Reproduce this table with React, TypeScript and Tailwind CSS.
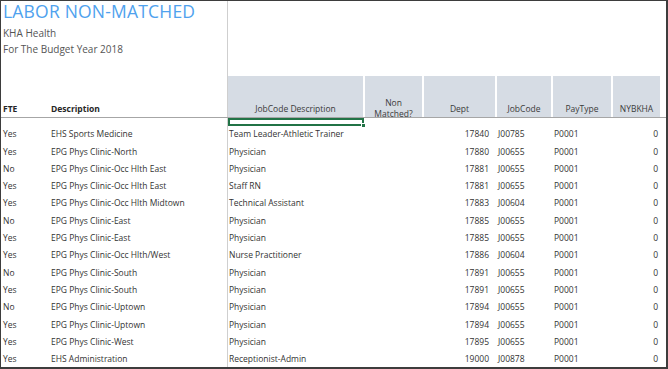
import React from "react";

type Row = [string, string, string, string, string, string, string];

const rows: Row[] = [
  ["Yes", "EHS Sports Medicine", "Team Leader-Athletic Trainer", "17840", "J00785", "P0001", "0"],
  ["Yes", "EPG Phys Clinic-North", "Physician", "17880", "J00655", "P0001", "0"],
  ["No", "EPG Phys Clinic-Occ Hlth East", "Physician", "17881", "J00655", "P0001", "0"],
  ["Yes", "EPG Phys Clinic-Occ Hlth East", "Staff RN", "17881", "J00655", "P0001", "0"],
  ["Yes", "EPG Phys Clinic-Occ Hlth Midtown", "Technical Assistant", "17883", "J00604", "P0001", "0"],
  ["No", "EPG Phys Clinic-East", "Physician", "17885", "J00655", "P0001", "0"],
  ["Yes", "EPG Phys Clinic-East", "Physician", "17885", "J00655", "P0001", "0"],
  ["Yes", "EPG Phys Clinic-Occ Hlth/West", "Nurse Practitioner", "17886", "J00604", "P0001", "0"],
  ["No", "EPG Phys Clinic-South", "Physician", "17891", "J00655", "P0001", "0"],
  ["Yes", "EPG Phys Clinic-South", "Physician", "17891", "J00655", "P0001", "0"],
  ["No", "EPG Phys Clinic-Uptown", "Physician", "17894", "J00655", "P0001", "0"],
  ["Yes", "EPG Phys Clinic-Uptown", "Physician", "17894", "J00655", "P0001", "0"],
  ["Yes", "EPG Phys Clinic-West", "Physician", "17895", "J00655", "P0001", "0"],
  ["Yes", "EHS Administration", "Receptionist-Admin", "19000", "J00878", "P0001", "0"],
];

const font = { fontFamily: '"Open Sans", "Noto Sans", sans-serif' };

export default function App() {
  return (
    <div
      className="w-[668px] h-[369px] bg-white border-l border-t border-r-2 border-b-2 border-[#3d3d3d] overflow-hidden text-[#3a3a3a]"
      style={font}
    >
      {/* Top header area */}
      <div className="flex h-[116px]">
        <div className="w-[226px] flex flex-col pl-[2px]">
          <div className="text-[17.5px] leading-[20px] text-[#4fa2ee] mt-[0px] tracking-[0.2px]">LABOR NON-MATCHED</div>
          <div className="text-[10px] leading-[14px] text-[#555] mt-[5px]">KHA Health</div>
          <div className="text-[10px] leading-[14px] text-[#555] mt-[2px]">For The Budget Year 2018</div>
          <div className="flex-1" />
          <div className="flex text-[8.5px] font-bold text-[#262626] leading-[12px] mb-[2px]">
            <div className="w-[48px]">FTE</div>
            <div>Description</div>
          </div>
        </div>
        <div className="w-px bg-[#cfcfcf]" />
        <div className="flex-1 flex flex-col justify-end">
          <div className="flex h-[41px] gap-[2px] text-[8.5px] leading-[11px] text-[#3b3b3b] pr-[6px]">
            <div className="w-[135px] bg-[#d6dce4] pt-[23px] flex items-center justify-center overflow-hidden">JobCode Description</div>
            <div className="w-[57px] bg-[#d6dce4] pt-[23px] flex items-center justify-center overflow-hidden text-center">
              <div>Non<br />Matched?</div>
            </div>
            <div className="w-[71px] bg-[#d6dce4] pt-[23px] flex items-center justify-center overflow-hidden">Dept</div>
            <div className="w-[54px] bg-[#d6dce4] pt-[23px] flex items-center justify-center overflow-hidden">JobCode</div>
            <div className="w-[58px] bg-[#d6dce4] pt-[23px] flex items-center justify-center overflow-hidden">PayType</div>
            <div className="flex-1 bg-[#d6dce4] pt-[23px] flex items-center justify-center overflow-hidden">NYBKHA</div>
          </div>
        </div>
      </div>
      <div className="h-px bg-[#a6a6a6]" />
      {/* thin selected row */}
      <div className="flex h-[8px]">
        <div className="w-[226px]" />
        <div className="w-px bg-[#cfcfcf]" />
        <div className="relative w-[136px] border-2 border-[#217346]">
          <div className="absolute right-[-4px] bottom-[-4px] w-[5px] h-[5px] bg-[#217346] border border-white" />
        </div>
      </div>
      {/* data rows */}
      <div className="text-[8.5px] text-[#333]">
        {rows.map((r, i) => (
          <div key={i} className="flex h-[17.3px] items-center">
            <div className="w-[226px] h-full flex items-center pl-[2px]">
              <div className="w-[48px]">{r[0]}</div>
              <div>{r[1]}</div>
            </div>
            <div className="w-px h-full bg-[#cfcfcf]" />
            <div className="w-[137px] pl-[1px]">{r[2]}</div>
            <div className="w-[59px]" />
            <div className="w-[65px] text-right">{r[3]}</div>
            <div className="w-[9px]" />
            <div className="w-[56px]">{r[4]}</div>
            <div className="w-[60px]">{r[5]}</div>
            <div className="w-[44px] text-right">{r[6]}</div>
          </div>
        ))}
      </div>
    </div>
  );
}
